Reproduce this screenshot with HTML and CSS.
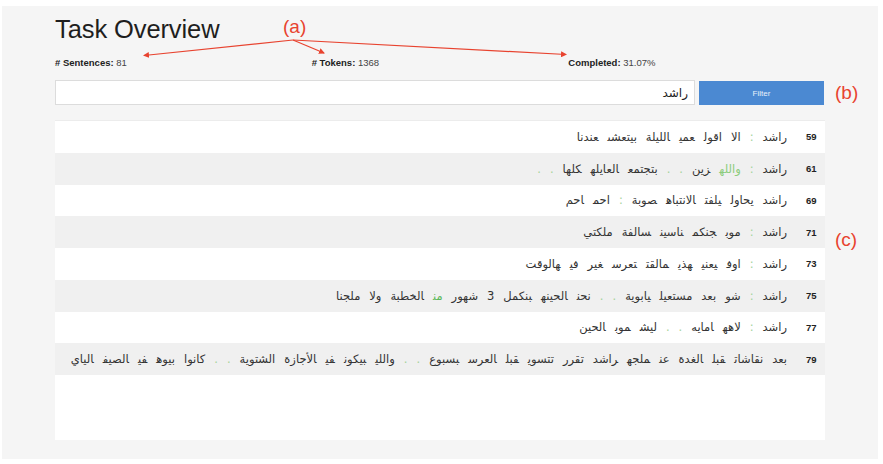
FILE: index.html
```html
<!DOCTYPE html>
<html lang="en">
<head>
<meta charset="utf-8">
<title>Task Overview</title>
<link rel="stylesheet" href="styles.css">
</head>
<body>
<main class="panel">
  <h1 class="title">Task Overview</h1>

  <div class="stats">
    <div class="stat"><b># Sentences:</b> 81</div>
    <div class="stat"><b># Tokens:</b> 1368</div>
    <div class="stat"><b>Completed:</b> 31.07%</div>
  </div>

  <form class="filter">
    <input class="filter-input" type="text" value="راشد" dir="rtl">
    <button class="filter-btn" type="button">Filter</button>
  </form>

  <section class="sentences">
    <div class="row">
      <span class="num">59</span>
      <span class="text"><span class="tk">راشد</span><span class="tk p">:</span><span class="tk">الا</span><span class="tk">اقول</span><span class="tk">عمي</span><span class="tk">الليلة</span><span class="tk">بيتعشى</span><span class="tk">عندنا</span></span>
    </div>
    <div class="row">
      <span class="num">61</span>
      <span class="text"><span class="tk">راشد</span><span class="tk p">:</span><span class="tk g">والله</span><span class="tk">زين</span><span class="tk p">.</span><span class="tk p">.</span><span class="tk">بتجتمع</span><span class="tk">العايله</span><span class="tk">كلها</span><span class="tk p">.</span><span class="tk p">.</span></span>
    </div>
    <div class="row">
      <span class="num">69</span>
      <span class="text"><span class="tk">راشد</span><span class="tk">يحاول</span><span class="tk">يلفت</span><span class="tk">الانتباه</span><span class="tk">صوبة</span><span class="tk p">:</span><span class="tk">احم</span><span class="tk">احم</span></span>
    </div>
    <div class="row">
      <span class="num">71</span>
      <span class="text"><span class="tk">راشد</span><span class="tk p">:</span><span class="tk">موب</span><span class="tk">جنكم</span><span class="tk">ناسين</span><span class="tk">سالفة</span><span class="tk">ملكتي</span></span>
    </div>
    <div class="row">
      <span class="num">73</span>
      <span class="text"><span class="tk">راشد</span><span class="tk p">:</span><span class="tk">اوف</span><span class="tk">يعني</span><span class="tk">هذي</span><span class="tk">مالقت</span><span class="tk">تعرس</span><span class="tk">غير</span><span class="tk">في</span><span class="tk">هالوقت</span></span>
    </div>
    <div class="row">
      <span class="num">75</span>
      <span class="text"><span class="tk">راشد</span><span class="tk p">:</span><span class="tk">شو</span><span class="tk">بعد</span><span class="tk">مستعيل</span><span class="tk">يابوية</span><span class="tk p">.</span><span class="tk p">.</span><span class="tk">نحن</span><span class="tk">الحينه</span><span class="tk">بنكمل</span><span class="tk">3</span><span class="tk">شهور</span><span class="tk g2">من</span><span class="tk">الخطبة</span><span class="tk">ولا</span><span class="tk">ملجنا</span></span>
    </div>
    <div class="row">
      <span class="num">77</span>
      <span class="text"><span class="tk">راشد</span><span class="tk p">:</span><span class="tk">لاهه</span><span class="tk">امايه</span><span class="tk p">.</span><span class="tk p">.</span><span class="tk">ليش</span><span class="tk">موب</span><span class="tk">الحين</span></span>
    </div>
    <div class="row">
      <span class="num">79</span>
      <span class="text"><span class="tk">بعد</span><span class="tk">نقاشات</span><span class="tk">قبل</span><span class="tk">الغدة</span><span class="tk">عن</span><span class="tk">ملجه</span><span class="tk">راشد</span><span class="tk">تقرر</span><span class="tk">تتسوي</span><span class="tk">قبل</span><span class="tk">العرس</span><span class="tk">بسبوع</span><span class="tk p">.</span><span class="tk p">.</span><span class="tk">واللي</span><span class="tk">بيكون</span><span class="tk">في</span><span class="tk">الأجازة</span><span class="tk">الشتوية</span><span class="tk p">.</span><span class="tk p">.</span><span class="tk">كانوا</span><span class="tk">بيوه</span><span class="tk">في</span><span class="tk">الصيف</span><span class="tk">الياي</span></span>
    </div>
  </section>

  <!-- callout labels drawn over the page -->
  <div class="callouts">
    <svg class="arrows" width="883" height="464" viewBox="0 0 883 464">
      <defs>
        <marker id="head" markerWidth="6" markerHeight="6" refX="5" refY="3" orient="auto" markerUnits="userSpaceOnUse">
          <path d="M0,0 L6,3 L0,6 Z" fill="#e8432f"/>
        </marker>
      </defs>
      <g stroke="#e8432f" stroke-width="1.2" fill="none">
        <line x1="293" y1="40" x2="144" y2="55.5" marker-end="url(#head)"/>
        <line x1="293" y1="40" x2="324" y2="53" marker-end="url(#head)"/>
        <line x1="293" y1="40" x2="566" y2="54.5" marker-end="url(#head)"/>
      </g>
    </svg>
    <span class="tag tag-a">(a)</span>
    <span class="tag tag-b">(b)</span>
    <span class="tag tag-c">(c)</span>
  </div>
</main>
</body>
</html>
```

FILE: styles.css
```css
html, body {
  margin: 0;
  padding: 0;
  background: #ffffff;
}

body {
  width: 883px;
  height: 464px;
  overflow: hidden;
  font-family: "Liberation Sans", Arial, sans-serif;
  color: #222;
}

.panel {
  position: relative;
  box-sizing: border-box;
  margin: 6px 0 0 2px;
  width: 876px;
  height: 453px;
  padding: 8px 53px 0 53px;
  background: #f5f5f5;
  display: flex;
  flex-direction: column;
}

.title {
  margin: 0;
  font-size: 25.5px;
  line-height: 30px;
  font-weight: normal;
  color: #1e1e1e;
  letter-spacing: -0.1px;
}

.stats {
  margin-top: 13px;
  display: grid;
  grid-template-columns: repeat(3, 1fr);
  font-size: 9.5px;
  line-height: 12px;
  color: #444;
}

.stat b {
  color: #222;
}

.filter {
  margin: 11px 0 0 0;
  display: flex;
  gap: 4px;
  height: 25px;
}

.filter-input {
  box-sizing: border-box;
  width: 640px;
  height: 25px;
  margin: 0;
  padding: 0 6px;
  border: 1px solid #dcdcdc;
  background: #fff;
  font-family: "DejaVu Sans", sans-serif;
  font-size: 12px;
  color: #222;
  outline: none;
}

.filter-btn {
  width: 125px;
  height: 24px;
  margin: 1px 0 0 0;
  border: none;
  background: #4b89d2;
  color: #e8f0fa;
  font-family: "Liberation Sans", Arial, sans-serif;
  font-size: 8px;
  padding: 0;
}

.sentences {
  margin-top: 15px;
  height: 320px;
  background: #fff;
  border-top: 1px solid #ececec;
  box-sizing: border-box;
  overflow: hidden;
}

.row {
  height: 31.75px;
  display: flex;
  flex-direction: row-reverse;
  align-items: center;
  padding-right: 7px;
  white-space: nowrap;
  overflow: hidden;
}

.row:nth-child(even) {
  background: #f0f0f0;
}

.num {
  flex: none;
  font-size: 9.5px;
  font-weight: bold;
  color: #222;
  width: 12px;
  text-align: left;
}

.text {
  flex: none;
  direction: rtl;
  margin-right: 19px;
  font-family: "DejaVu Sans", sans-serif;
  font-size: 11.5px;
  color: #333;
}

.tk {
  margin-left: 9px;
}

.tk.p {
  color: #a5d39a;
}

.tk.g {
  color: #8ccc7c;
}

.tk.g2 {
  color: #5cb85c;
}

/* annotation layer */
.callouts {
  position: absolute;
  left: -2px;
  top: -6px;
  width: 883px;
  height: 464px;
  pointer-events: none;
}

.arrows {
  position: absolute;
  left: 0;
  top: 0;
}

.tag {
  position: absolute;
  font-family: "Liberation Sans", Arial, sans-serif;
  font-size: 19px;
  line-height: 22px;
  color: #e8432f;
}

.tag-a { left: 283px; top: 16px; }
.tag-b { left: 835px; top: 82px; }
.tag-c { left: 835px; top: 229px; }
```
